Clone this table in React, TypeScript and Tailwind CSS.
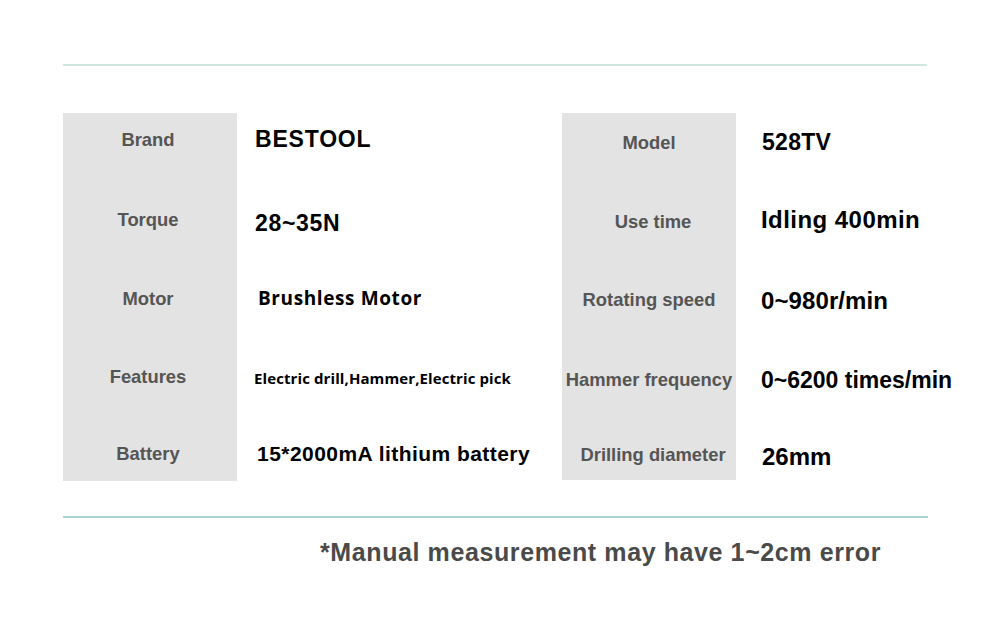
import React from "react";

const arial = { fontFamily: '"Liberation Sans", Arial, sans-serif' };
const open = { fontFamily: '"Open Sans", "Noto Sans", sans-serif' };

export default function App() {
  return (
    <div className="w-[990px] h-[632px] bg-white relative overflow-hidden" style={arial}>
      <div className="pt-[64px] pl-[63px]">
        <div className="w-[864px] h-[2px] bg-[#cfe9e1]" />
        <div className="flex mt-[47px]">
          {/* Left block */}
          <div className="w-[174px] h-[368px] bg-[#e3e3e3] flex flex-col items-center pr-[4px] text-[18.4px] font-bold text-[#555555] leading-[24px] whitespace-nowrap">
            <div className="mt-[15px] h-[24px]">Brand</div>
            <div className="mt-[56px] h-[24px]">Torque</div>
            <div className="mt-[55px] h-[24px]">Motor</div>
            <div className="mt-[54px] h-[24px]">Features</div>
            <div className="mt-[53px] h-[24px]">Battery</div>
          </div>
          <div className="w-[325px] flex flex-col text-black font-bold leading-[30px] whitespace-nowrap">
            <div className="mt-[11px] h-[30px] ml-[18px] text-[23px] tracking-[0.8px]">BESTOOL</div>
            <div className="mt-[54px] h-[30px] ml-[18px] text-[23px] tracking-[0.7px]">28~35N</div>
            <div className="mt-[45px] h-[30px] ml-[21px] text-[19px] tracking-[0.6px]" style={open}>Brushless Motor</div>
            <div className="mt-[50px] h-[30px] ml-[17px] text-[15px] tracking-[0.1px]" style={open}>Electric drill,Hammer,Electric pick</div>
            <div className="mt-[46px] h-[30px] ml-[20px] text-[21px] tracking-[0.45px]">15*2000mA lithium battery</div>
          </div>
          {/* Right block */}
          <div className="w-[174px] h-[367px] bg-[#e3e3e3] flex flex-col items-center text-[18.4px] font-bold text-[#555555] leading-[24px] whitespace-nowrap">
            <div className="mt-[18px] h-[24px]">Model</div>
            <div className="mt-[55px] h-[24px] pl-[8px]">Use time</div>
            <div className="mt-[54px] h-[24px]">Rotating speed</div>
            <div className="mt-[56px] h-[24px]">Hammer frequency</div>
            <div className="mt-[51px] h-[24px] pl-[8px]">Drilling diameter</div>
          </div>
          <div className="flex flex-col text-black font-bold leading-[30px] whitespace-nowrap">
            <div className="mt-[14px] h-[30px] ml-[26px] text-[23px] tracking-[0.3px]">528TV</div>
            <div className="mt-[48px] h-[30px] ml-[25px] text-[24px] tracking-[0.45px]">Idling 400min</div>
            <div className="mt-[51px] h-[30px] ml-[25px] text-[24px] tracking-[0.1px]">0~980r/min</div>
            <div className="mt-[49px] h-[30px] ml-[25px] text-[23px]">0~6200 times/min</div>
            <div className="mt-[47px] h-[30px] ml-[26px] text-[24px]">26mm</div>
          </div>
        </div>
        <div className="w-[865px] h-[2px] bg-[#a9d3d3] mt-[35px]" />
        <div className="mt-[19px] ml-[257px] text-[25px] font-bold text-[#4a4a4a] leading-[30px] tracking-[0.6px] whitespace-nowrap">
          *Manual measurement may have 1~2cm error
        </div>
      </div>
    </div>
  );
}
